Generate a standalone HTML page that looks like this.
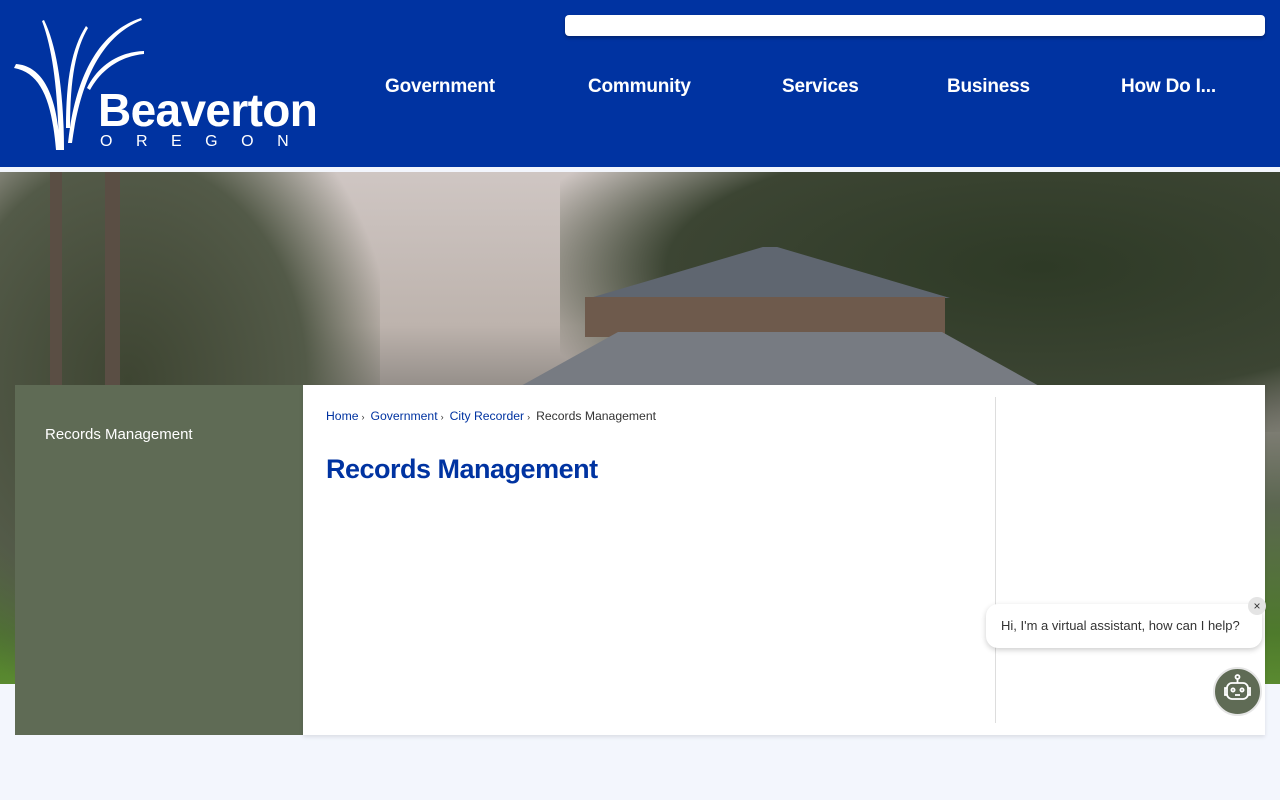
<!DOCTYPE html>
<html><head><meta charset="utf-8"><style>
*{margin:0;padding:0;box-sizing:border-box}
body{width:1280px;height:800px;overflow:hidden;background:#f3f6fd;font-family:"Liberation Sans",Arial,sans-serif;position:relative}
.hdr{position:absolute;left:0;top:0;width:1280px;height:167px;background:#0033a1}
.search{position:absolute;left:565px;top:15px;width:700px;height:21px;background:#fff;border-radius:4px;box-shadow:0 2px 3px rgba(0,0,0,.3)}
.nav a{position:absolute;top:76px;color:#fff;font-weight:bold;font-size:19px;text-decoration:none;letter-spacing:-.2px}
.hero{position:absolute;left:0;top:172px;width:1280px;height:512px;overflow:hidden;
background:linear-gradient(180deg,#cfc6c3 0%,#bdb3ad 30%,#8a8580 45%,#5b6650 65%,#4e7a2c 90%,#5a8a30 100%)}
.side{position:absolute;left:15px;top:385px;width:288px;height:350px;background:#5f6b55}
.side span{position:absolute;left:30px;top:41px;color:#fff;font-size:15px}
.main{position:absolute;left:303px;top:385px;width:962px;height:350px;background:#fff;box-shadow:0 2px 4px rgba(0,0,0,.1)}
.bc{position:absolute;left:23px;top:24px;font-size:12.2px;color:#333}
.bc a{color:#0033a1;text-decoration:none}
.bc i{font-style:normal;font-size:9px;margin:0 6px 0 3px}
h1{position:absolute;left:23px;top:69px;font-size:27px;color:#0033a1;font-weight:bold;letter-spacing:-.5px}
.vl{position:absolute;left:692px;top:12px;width:1px;height:326px;background:#ddd}
.bub{position:absolute;left:986px;top:604px;width:276px;height:44px;background:#fff;border-radius:12px;box-shadow:0 2px 6px rgba(0,0,0,.2);font-size:13px;color:#333;padding:14px 0 0 15px}
.x{position:absolute;left:1248px;top:597px;width:18px;height:18px;border-radius:50%;background:#e4e4e4;font-size:12px;text-align:center;line-height:18px;color:#333}
.bot{position:absolute;left:1213px;top:667px;width:49px;height:49px;border-radius:50%;background:#5f6b55;border:2px solid #e6e6e6}
</style></head><body>
<div class="hdr">
<svg style="position:absolute;left:14px;top:18px" width="305" height="135" viewBox="0 0 305 135">
<g fill="#fff">
<path d="M30 2 C44 30 50 80 50 132 L45 132 C44 80 40 35 28 3Z"/>
<path d="M2 46 C30 48 44 80 46 132 L42 132 C38 85 28 55 0 50Z"/>
<path d="M74 10 C62 30 56 60 56 110 L52 110 C52 60 58 30 72 8Z"/>
<path d="M128 2 C95 15 68 50 58 125 L54 125 C62 50 90 12 127 0Z"/>
<path d="M130 36 C108 38 88 50 76 72 L73 70 C84 48 104 34 130 33Z"/>
</g>
<text x="84" y="108" fill="#fff" font-family="Liberation Sans,sans-serif" font-weight="bold" font-size="46" letter-spacing="-1.8" textLength="218">Beaverton</text>
<text x="86" y="128" fill="#fff" font-family="Liberation Sans,sans-serif" font-size="16" letter-spacing="23.5">OREGON</text>
</svg>
<div class="search"></div>
<div class="nav"><a style="left:385px">Government</a><a style="left:588px">Community</a><a style="left:782px">Services</a><a style="left:947px">Business</a><a style="left:1121px">How Do I...</a></div>
</div>
<div class="hero">
<div style="position:absolute;left:-40px;top:0;width:420px;height:520px;background:radial-gradient(ellipse at 40% 40%,#3e4532 0%,#535a48 50%,rgba(90,95,80,0) 75%)"></div>
<div style="position:absolute;left:560px;top:-40px;width:800px;height:300px;background:radial-gradient(ellipse at 60% 45%,#2e3a26 0%,#3c4533 55%,rgba(60,70,50,0) 80%)"></div>
<div style="position:absolute;left:50px;top:0;width:12px;height:220px;background:#5a4e44"></div>
<div style="position:absolute;left:105px;top:0;width:15px;height:220px;background:#5a4e44"></div>
<div style="position:absolute;left:590px;top:75px;width:360px;height:60px;background:#5f6670;clip-path:polygon(48% 0,52% 0,100% 85%,0 85%)"></div>
<div style="position:absolute;left:585px;top:125px;width:360px;height:40px;background:#6e5a4c"></div>
<div style="position:absolute;left:510px;top:160px;width:540px;height:60px;background:#777b82;clip-path:polygon(20% 0,80% 0,100% 100%,0 100%)"></div>
</div>
<div class="side"><span>Records Management</span></div>
<div class="main">
<div class="bc"><a>Home</a><i>›</i><a>Government</a><i>›</i><a>City Recorder</a><i>›</i>Records Management</div>
<h1>Records Management</h1>
<div class="vl"></div>
</div>
<div class="bub">Hi, I'm a virtual assistant, how can I help?</div>
<div class="x">×</div>
<div class="bot"><svg width="45" height="45" viewBox="0 0 45 45"><g fill="none" stroke="#fff" stroke-width="1.8"><circle cx="22.5" cy="8" r="2"/><path d="M22.5 10v4"/><rect x="12" y="14" width="21" height="16" rx="5"/><path d="M12 19h-2v7h2M33 19h2v7h-2"/><circle cx="18" cy="21" r="1.6"/><circle cx="27" cy="21" r="1.6"/><path d="M20 26h5"/></g></svg></div>
</body></html>
